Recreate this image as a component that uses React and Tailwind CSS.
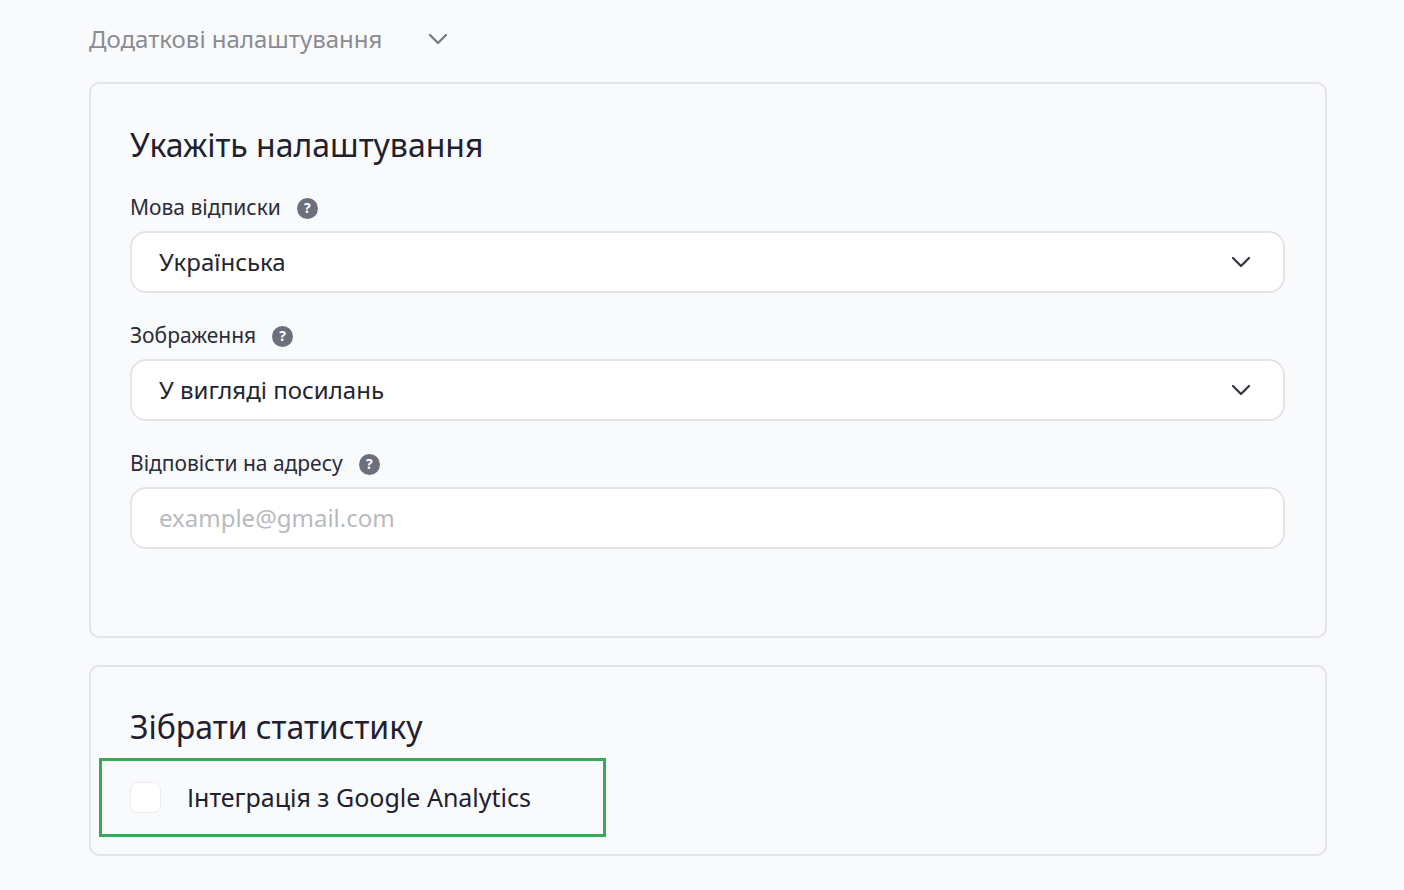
import { ChevronDown } from 'lucide-react'

function Help() {
  return (
    <span className="ml-4 inline-flex h-[21px] w-[21px] items-center justify-center rounded-full bg-[#6e6f7d] text-[14px] font-bold leading-none text-white">
      ?
    </span>
  )
}

function Field({ label, value, placeholder, select }) {
  return (
    <div className="flex flex-col">
      <div className="flex h-[30px] items-center text-[21px] text-[#2a2c3a]">
        {label}
        <Help />
      </div>
      <div className="mt-[8px] flex h-[62px] items-center justify-between rounded-[16px] border-2 border-[#e4e5e8] bg-white pl-[27px] pr-[26px]">
        {value ? (
          <span className="text-[24px] text-[#23252f]">{value}</span>
        ) : (
          <span className="text-[24px] text-[#b9bac0]">{placeholder}</span>
        )}
        {select && <ChevronDown size={32} strokeWidth={1.8} className="text-[#3a3c48]" />}
      </div>
    </div>
  )
}

export default function App() {
  return (
    <div className="min-h-[890px] w-[1404px] bg-[#f9fafc] font-['Noto_Sans',sans-serif]">
      <div className="pl-[89px] pr-[77px] pt-[20px]">
        <div className="flex h-[38px] items-center text-[24px] text-[#8b8c92]">
          Додаткові налаштування
          <ChevronDown size={32} strokeWidth={1.8} className="ml-[40px] text-[#7a7b85]" />
        </div>

        <div className="mt-[24px] h-[556px] rounded-[10px] border-2 border-[#e3e4e7] pl-[39px] pr-[40px] pt-[41px]">
          <h2 className="text-[32px] leading-[40px] text-[#1f2130]">Укажіть налаштування</h2>
          <div className="mt-[28px] flex flex-col gap-[28px]">
            <Field label="Мова відписки" value="Українська" select />
            <Field label="Зображення" value="У вигляді посилань" select />
            <Field label="Відповісти на адресу" placeholder="example@gmail.com" />
          </div>
        </div>

        <div className="mt-[27px] h-[191px] rounded-[10px] border-2 border-[#e3e4e7] pl-[8px] pt-[40px]">
          <h2 className="pl-[31px] text-[32px] leading-[40px] text-[#1f2130]">Зібрати статистику</h2>
          <div className="mt-[11px] flex h-[79px] w-[507px] items-center border-[3px] border-[#3aa856] pl-[28px]">
            <span className="h-[31px] w-[31px] rounded-[8px] border border-[#ebecef] bg-white" />
            <span className="ml-[26px] text-[25px] text-[#1f2130]">Інтеграція з Google Analytics</span>
          </div>
        </div>
      </div>
    </div>
  )
}
